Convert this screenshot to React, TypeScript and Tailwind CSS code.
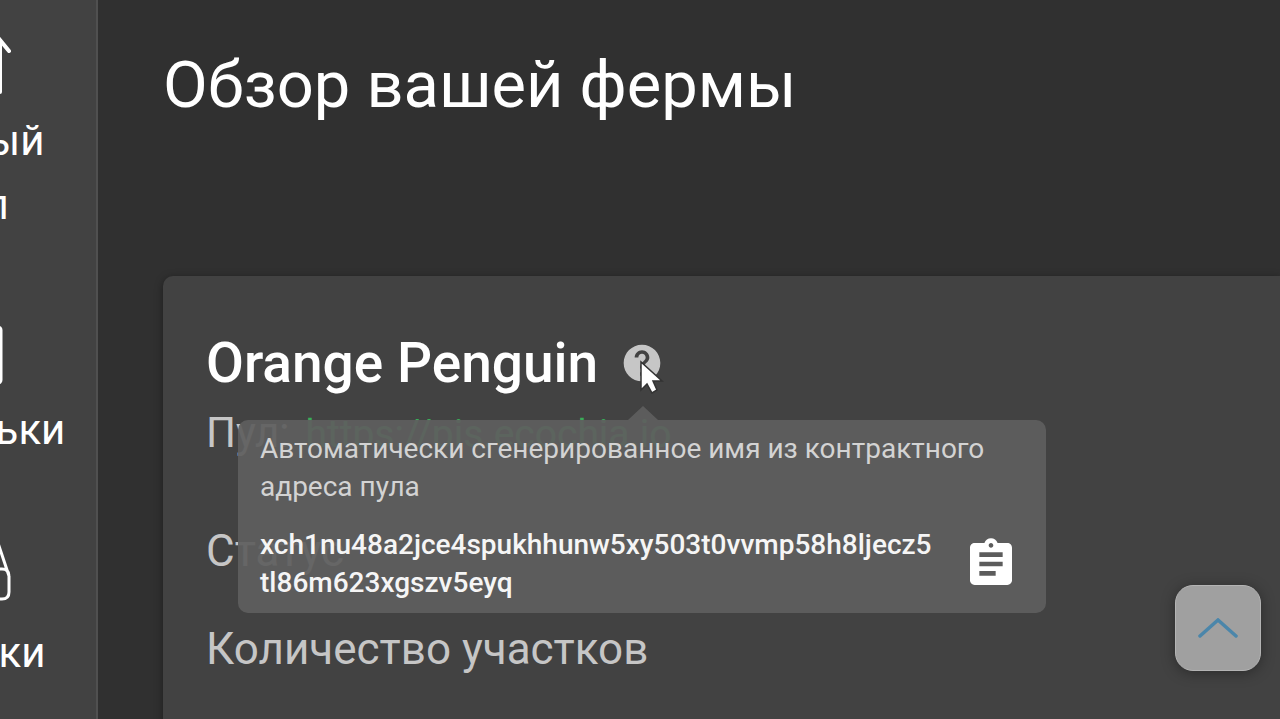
import React from 'react'

const NavItem = ({ label, className, children }: { label: string; className: string; children: React.ReactNode }) => (
  <a href="#" className={`flex flex-col items-center text-center ${className}`}>
    {children}
    <span className="w-[220px] text-[42px] leading-[64px]">{label}</span>
  </a>
)

const Sidebar = () => (
  <aside className="flex w-[98px] shrink-0 justify-end overflow-hidden border-r-2 border-[#505050] bg-[#424242] text-white">
    <nav className="w-[262px] shrink-0">
      <NavItem label="Полный узел" className="pt-[36px]">
        <svg className="mb-[13px] h-[60px] w-[92px]" viewBox="0 0 92 60" fill="none" stroke="currentColor" strokeWidth="4" strokeLinecap="round">
          <path d="M36 5v53M26 14l10-10 10 10M81 56V5M71 14L81 4l9 11" />
        </svg>
      </NavItem>
      <NavItem label="Кошельки" className="pt-[88px]">
        <svg className="mb-[13px] h-[60px] w-[76px]" viewBox="0 0 76 60" fill="none" stroke="currentColor" strokeWidth="3">
          <rect x="2" y="2" width="72" height="56" rx="3" />
        </svg>
      </NavItem>
      <NavItem label="Участки" className="pt-[68px]">
        <svg className="mb-[19px] h-[72px] w-[92px]" viewBox="0 0 92 72" fill="none" stroke="currentColor" strokeWidth="3">
          <path d="M2 46L16 4h60l14 42M9 39h74q7 0 7 7v16q0 7-7 7H9q-7 0-7-7V46q0-7 7-7z" />
        </svg>
      </NavItem>
    </nav>
  </aside>
)

const Tooltip = () => (
  <div role="tooltip" className="absolute top-[144px] left-[75px] w-[808px] rounded-[10px] bg-[#5f5f5f]/93 px-[22px] pt-[10px] pb-[11px] text-[28px] leading-[38px]">
    <svg className="absolute -top-[14px] left-[390px] h-[14px] w-[30px]" viewBox="0 0 30 14">
      <path d="M0 14L15 0l15 14z" fill="#5f5f5f" fillOpacity="0.93" />
    </svg>
    <p className="text-[#d3d3d3]">Автоматически сгенерированное имя из контрактного адреса пула</p>
    <div className="mt-[20px] flex items-center justify-between">
      <p className="w-[672px] font-medium break-all text-[#f5f5f5]">xch1nu48a2jce4spukhhunw5xy503t0vvmp58h8ljecz5tl86m623xgszv5eyq</p>
      <button type="button" aria-label="Копировать" className="mr-[5px]">
        <svg className="size-[56px]" viewBox="0 0 24 24" fill="white">
          <path d="M19 3h-4.180C14.400 1.840 13.300 1 12 1s-2.400.840-2.820 2H5c-1.100 0-2 .900-2 2v14c0 1.100.900 2 2 2h14c1.100 0 2-.900 2-2V5c0-1.100-.900-2-2-2zm-7 0c.550 0 1 .450 1 1s-.450 1-1 1-1-.450-1-1 .450-1 1-1zm2 14H7v-2h7v2zm3-4H7v-2h10v2zm0-4H7V7h10v2z" />
        </svg>
      </button>
    </div>
  </div>
)

const Cursor = () => (
  <svg className="absolute top-[19px] left-[20px] h-[34px] w-[24px]" viewBox="0 0 24 34" fill="white" stroke="#333" strokeWidth="1.500">
    <path d="M1 2v28l6-6 5 9 5-3-4-9h9z" />
  </svg>
)

const App = () => {
  return (
    <div className="flex h-screen overflow-hidden bg-[#303030] font-[Roboto,sans-serif]">
      <Sidebar />
      <main className="min-w-0 grow pt-[45px] pl-[65px]">
        <h1 className="text-[65px] leading-[80px] text-white">Обзор вашей фермы</h1>
        <section className="relative mt-[151px] h-full rounded-tl-[10px] bg-[#424242] pt-[55px] pl-[43px] shadow-[0_2px_8px_rgba(0,0,0,0.4)]">
          <div className="flex items-center gap-[22px]">
            <h2 className="text-[55px] leading-[64px] font-medium text-white">Orange Penguin</h2>
            <button type="button" aria-label="Справка" className="relative">
              <svg className="size-[44px]" viewBox="0 0 24 24" fill="#c6c6c6">
                <path d="M12 2C6.480 2 2 6.480 2 12s4.480 10 10 10 10-4.480 10-10S17.520 2 12 2zm1 17h-2v-2h2v2zm2.070-7.750l-.900.920C13.450 12.900 13 13.500 13 15h-2v-.500c0-1.100.450-2.100 1.170-2.830l1.240-1.260c.370-.360.590-.860.590-1.410 0-1.100-.900-2-2-2s-2 .900-2 2H8c0-2.210 1.790-4 4-4s4 1.790 4 4c0 .880-.360 1.680-.930 2.250z" />
              </svg>
              <Cursor />
            </button>
          </div>
          <p className="mt-[6px] flex items-baseline gap-[16px] text-[42px] leading-[64px] text-[#c6c6c6]">
            Пул: <a href="#" className="text-[39px] text-[#3aac59]">https://pis.ecochia.io</a>
          </p>
          <dl className="mt-[53px] text-[44px] leading-[64px] text-[#c6c6c6]">
            <dt>Статус</dt>
            <dt className="mt-[34px]">Количество участков</dt>
          </dl>
          <Tooltip />
        </section>
      </main>
      <button type="button" aria-label="Наверх" className="fixed right-[19px] bottom-[48px] flex size-[86px] items-center justify-center rounded-[18px] border border-[#b4b4b4] bg-[#a0a0a0] shadow-[0_2px_14px_rgba(0,0,0,0.35)]">
        <svg className="h-[20px] w-[40px]" viewBox="0 0 40 20" fill="none" stroke="#4b86aa" strokeWidth="3.500" strokeLinecap="round">
          <path d="M2 18L20 2l18 16" />
        </svg>
      </button>
    </div>
  )
}

export default App
